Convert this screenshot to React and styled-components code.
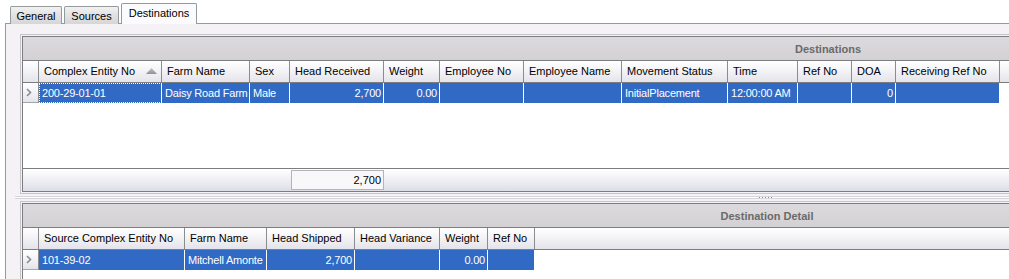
import styled, { createGlobalStyle } from "styled-components";

const GlobalStyle = createGlobalStyle`
  html, body {
    margin: 0;
    padding: 0;
    background: #ffffff;
  }
  body {
    font-family: "Liberation Sans", "DejaVu Sans", sans-serif;
    font-size: 11px;
    color: #000;
  }
`;

const mainColumns = [
  { title: "Complex Entity No", width: 123, sort: true, focus: true },
  { title: "Farm Name", width: 88 },
  { title: "Sex", width: 40 },
  { title: "Head Received", width: 94, right: true },
  { title: "Weight", width: 56, right: true },
  { title: "Employee No", width: 84 },
  { title: "Employee Name", width: 98 },
  { title: "Movement Status", width: 106 },
  { title: "Time", width: 70 },
  { title: "Ref No", width: 54 },
  { title: "DOA", width: 44, right: true },
  { title: "Receiving Ref No", width: 104 },
];

const mainRow = [
  "200-29-01-01",
  "Daisy Road Farm",
  "Male",
  "2,700",
  "0.00",
  "",
  "",
  "InitialPlacement",
  "12:00:00 AM",
  "",
  "0",
  "",
];

const detailColumns = [
  { title: "Source Complex Entity No", width: 146 },
  { title: "Farm Name", width: 82 },
  { title: "Head Shipped", width: 88, right: true },
  { title: "Head Variance", width: 85, right: true },
  { title: "Weight", width: 48, right: true },
  { title: "Ref No", width: 47 },
];

const detailRow = ["101-39-02", "Mitchell Amonte", "2,700", "", "0.00", ""];

function SortArrow() {
  return (
    <svg width="11" height="6" viewBox="0 0 11 6">
      <defs>
        <linearGradient id="sortfill" x1="0" y1="0" x2="0" y2="1">
          <stop offset="0" stopColor="#c4c4c8" />
          <stop offset="1" stopColor="#8e8e94" />
        </linearGradient>
      </defs>
      <polygon points="5.5,0 11,6 0,6" fill="url(#sortfill)" />
    </svg>
  );
}

function RowArrow() {
  return (
    <svg width="6" height="9" viewBox="0 0 6 9">
      <polyline
        points="1,1 4.5,4.5 1,8"
        fill="none"
        stroke="#8c8c8c"
        strokeWidth="1.6"
      />
    </svg>
  );
}

function SplitterDots() {
  return (
    <svg width="16" height="3" viewBox="0 0 16 3">
      {[0, 3, 6, 9, 12].map((x) => (
        <rect key={x} x={x + 1} y="1" width="1" height="1" fill="#8c8c8c" />
      ))}
    </svg>
  );
}

function Grid({ caption, captionWidth, columns, row, footer, bodyHeight }) {
  return (
    <GroupFrame>
      <GridBox>
        <Caption>
          <CaptionText $width={captionWidth}>{caption}</CaptionText>
        </Caption>
        <HeaderRow>
          <IndicatorHeader />
          {columns.map((col) => (
            <HeaderCell key={col.title} $width={col.width}>
              <span>{col.title}</span>
              {col.sort && <SortArrow />}
            </HeaderCell>
          ))}
          <HeaderFiller $bordered={!!footer} />
        </HeaderRow>
        <Body $height={bodyHeight}>
          <DataRow>
            <IndicatorCell>
              <RowArrow />
            </IndicatorCell>
            {columns.map((col, i) => (
              <DataCell
                key={col.title}
                $width={col.width}
                $right={col.right}
                $focus={col.focus}
              >
                {row[i]}
              </DataCell>
            ))}
          </DataRow>
        </Body>
        {footer && (
          <Footer>
            <SummaryBox $offset={footer.offset} $width={footer.width}>
              {footer.value}
            </SummaryBox>
          </Footer>
        )}
      </GridBox>
    </GroupFrame>
  );
}

export default function App() {
  return (
    <>
      <GlobalStyle />
      <Page>
        <TabStrip>
          <Tab $width={52}>General</Tab>
          <Tab $width={55}>Sources</Tab>
          <Tab $width={76} $active>
            Destinations
          </Tab>
        </TabStrip>
        <Panel>
          <Grid
            caption="Destinations"
            captionWidth={1610}
            columns={mainColumns}
            row={mainRow}
            bodyHeight={85}
            footer={{ offset: 268, width: 93, value: "2,700" }}
          />
          <Splitter>
            <SplitterDots />
          </Splitter>
          <Grid
            caption="Destination Detail"
            captionWidth={1488}
            columns={detailColumns}
            row={detailRow}
            bodyHeight={60}
          />
        </Panel>
      </Page>
    </>
  );
}

const Page = styled.div`
  width: 1009px;
  height: 279px;
  overflow: hidden;
  padding: 3px 0 0 5px;
  box-sizing: border-box;
`;

const TabStrip = styled.div`
  display: flex;
  align-items: flex-end;
  gap: 2px;
  height: 21px;
  padding-left: 5px;
`;

const Tab = styled.div`
  position: relative;
  z-index: ${(p) => (p.$active ? 1 : 0)};
  box-sizing: border-box;
  width: ${(p) => p.$width}px;
  height: ${(p) => (p.$active ? 21 : 18)}px;
  border: 1px solid #919b9c;
  border-bottom: none;
  border-radius: 2px 2px 0 0;
  background: ${(p) =>
    p.$active
      ? "#fbfbfd"
      : "linear-gradient(to bottom, #f2f2f2 0%, #e4e4e4 40%, #d6d6d6 100%)"};
  display: flex;
  align-items: center;
  justify-content: center;
  padding-bottom: ${(p) => (p.$active ? 2 : 0)}px;
  color: #000;
  white-space: nowrap;
`;

const Panel = styled.div`
  width: 1700px;
  margin-top: -1px;
  padding: 10px 0 0 14px;
  border: 1px solid #919b9c;
  border-right: none;
  border-bottom: none;
  background: #f4f2f4;
  height: 300px;
`;

const GroupFrame = styled.div`
  border: 1px solid #c6c4c8;
  padding: 1px;
`;

const GridBox = styled.div`
  display: flex;
  flex-direction: column;
  border: 1px solid #7b7d80;
  background: #ffffff;
`;

const Caption = styled.div`
  height: 23px;
  border-bottom: 1px solid #7b7d80;
  background: linear-gradient(to bottom, #dcdadc 0%, #d3d1d4 100%);
  display: flex;
  align-items: center;
`;

const CaptionText = styled.div`
  width: ${(p) => p.$width}px;
  text-align: center;
  font-family: "Liberation Sans", sans-serif;
  font-weight: bold;
  font-size: 11px;
  color: #6a6a6a;
`;

const headerGradient = "linear-gradient(to bottom, #ffffff 0%, #f4f4f7 45%, #e3e3ea 100%)";

const HeaderRow = styled.div`
  display: flex;
  height: 21px;
  border-bottom: 1px solid #7b7d80;
  background: ${headerGradient};
`;

const IndicatorHeader = styled.div`
  flex: 0 0 16px;
  box-sizing: border-box;
  border-right: 1px solid #8a8c90;
`;

const HeaderCell = styled.div`
  flex: 0 0 ${(p) => p.$width}px;
  box-sizing: border-box;
  border-right: 1px solid #8a8c90;
  display: flex;
  align-items: center;
  justify-content: space-between;
  padding: 0 4px 1px 5px;
  white-space: nowrap;
  overflow: hidden;
`;

const HeaderFiller = styled.div`
  flex: 0 0 ${(p) => (p.$bordered ? 9 : 0)}px;
  border-right: ${(p) => (p.$bordered ? "1px solid #8a8c90" : "none")};
`;

const Body = styled.div`
  height: ${(p) => p.$height}px;
  background: #ffffff;
`;

const DataRow = styled.div`
  display: flex;
  height: 20px;
`;

const IndicatorCell = styled.div`
  flex: 0 0 16px;
  box-sizing: border-box;
  border-right: 1px solid #8a8c90;
  border-bottom: 1px solid #a4a6a8;
  background: ${headerGradient};
  display: flex;
  align-items: center;
  padding-left: 3px;
`;

const DataCell = styled.div`
  flex: 0 0 ${(p) => p.$width}px;
  box-sizing: border-box;
  background: #316ac5;
  color: #ffffff;
  border-right: 1px solid #ffffff;
  line-height: 20px;
  letter-spacing: -0.2px;
  padding: ${(p) => (p.$right ? "0 2px 0 0" : "0 0 0 3px")};
  text-align: ${(p) => (p.$right ? "right" : "left")};
  white-space: nowrap;
  overflow: hidden;
  outline: ${(p) => (p.$focus ? "1px dotted #ffffff" : "none")};
  outline-offset: -1px;
`;

const Footer = styled.div`
  height: 22px;
  border-top: 1px solid #7b7d80;
  background: linear-gradient(to bottom, #ffffff 0%, #f2f2f6 40%, #dedee6 100%);
  display: flex;
  align-items: center;
`;

const SummaryBox = styled.div`
  margin-left: ${(p) => p.$offset}px;
  width: ${(p) => p.$width}px;
  height: 20px;
  box-sizing: border-box;
  border: 1px solid #b4b4b8;
  background: #f8f8fa;
  text-align: right;
  line-height: 18px;
  padding-right: 2px;
`;

const Splitter = styled.div`
  height: 7px;
  margin-left: -5px;
  padding-left: 743px;
  display: flex;
  align-items: center;
  background: linear-gradient(
    to bottom,
    transparent 0px,
    transparent 2px,
    #d6d6da 2px,
    #d6d6da 3px,
    #ffffff 3px,
    #ffffff 4px,
    #d6d6da 4px,
    #d6d6da 5px,
    transparent 5px
  );
`;
